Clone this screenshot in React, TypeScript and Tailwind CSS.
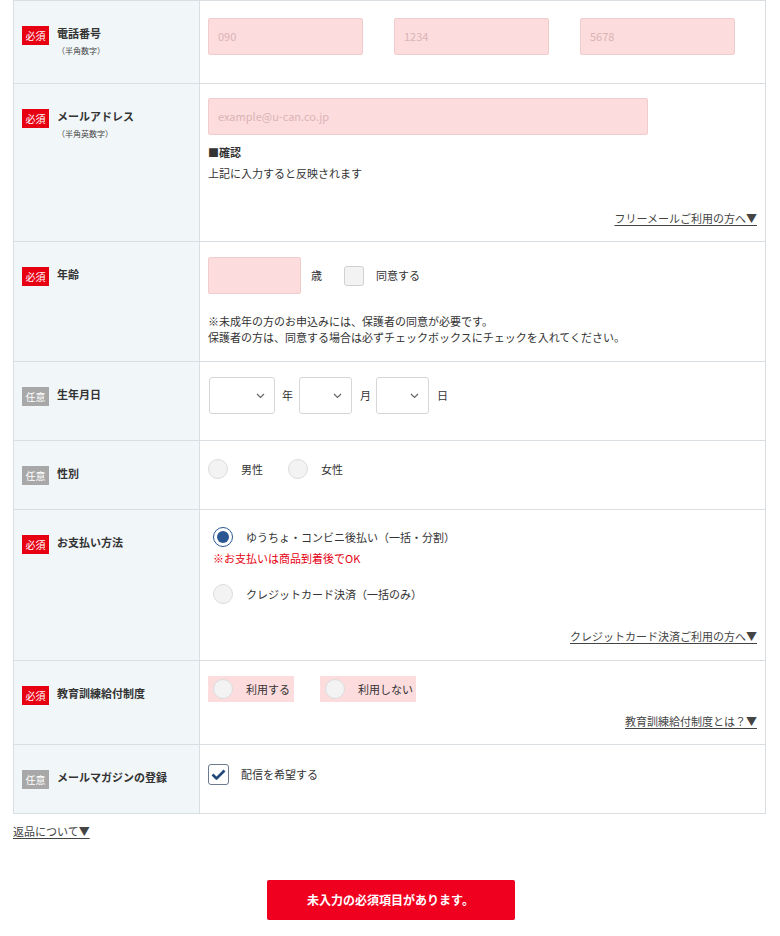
import React from 'react';

const font = { fontFamily: '"Noto Sans CJK JP", "Noto Sans", sans-serif' };

function Badge({ required }: { required: boolean }) {
  return (
    <span
      className={`inline-flex h-[19px] w-[27px] shrink-0 items-center justify-center text-[10px] leading-none text-white ${
        required ? 'bg-[#e60012]' : 'bg-[#a8a8a8]'
      }`}
    >
      {required ? '必須' : '任意'}
    </span>
  );
}

function Label({ required, title, sub }: { required: boolean; title: string; sub?: string }) {
  return (
    <div className="flex w-[186px] shrink-0 gap-[8px] border-r border-[#d9dee2] bg-[#f1f6f9] pl-[8px] pt-[25px]">
      <Badge required={required} />
      <div className="-mt-[2px] flex flex-col">
        <span className="text-[11px] font-bold leading-[19px] text-[#333]">{title}</span>
        {sub && <span className="mt-[2px] text-[8px] leading-[12px] text-[#444]">{sub}</span>}
      </div>
    </div>
  );
}

function Row({ h, children, label }: { h: string; children: React.ReactNode; label: React.ReactNode }) {
  return (
    <div className={`flex border-b border-[#d9dee2] ${h}`}>
      {label}
      <div className="relative flex-1 pl-[8px]">{children}</div>
    </div>
  );
}

function PinkInput({ w, placeholder }: { w: string; placeholder?: string }) {
  return (
    <div
      className={`flex h-[37px] items-center rounded-[2px] border border-[#f1cccc] bg-[#fddcdd] px-[9px] text-[11px] text-[#d9b4b6] ${w}`}
    >
      {placeholder}
    </div>
  );
}

function Radio({ checked }: { checked?: boolean }) {
  return (
    <span
      className={`flex h-[20px] w-[20px] shrink-0 items-center justify-center rounded-full border ${
        checked ? 'border-[#2b5793] bg-white' : 'border-[#dcdcdc] bg-[#f3f3f3]'
      }`}
    >
      {checked && <span className="h-[12px] w-[12px] rounded-full bg-[#2b5793]" />}
    </span>
  );
}

function Select({ w }: { w: string }) {
  return (
    <div className={`flex h-[37px] items-center justify-end rounded-[3px] border border-[#d6d6d6] bg-white pr-[9px] ${w}`}>
      <svg width="9" height="6" viewBox="0 0 9 6" fill="none">
        <path d="M1 1l3.5 3.5L8 1" stroke="#666" strokeWidth="1.2" />
      </svg>
    </div>
  );
}

function MoreLink({ text }: { text: string }) {
  return <span className="text-[11px] text-[#444] underline underline-offset-2">{text}</span>;
}

export default function App() {
  return (
    <div className="min-h-[936px] bg-white text-[#333]" style={font}>
      <div className="ml-[13px] w-[753px] border-x border-t border-[#d9dee2]">
        <Row h="h-[83px]" label={<Label required title="電話番号" sub="（半角数字）" />}>
          <div className="flex gap-[31px] pt-[17px]">
            <PinkInput w="w-[155px]" placeholder="090" />
            <PinkInput w="w-[155px]" placeholder="1234" />
            <PinkInput w="w-[155px]" placeholder="5678" />
          </div>
        </Row>

        <Row h="h-[158px]" label={<Label required title="メールアドレス" sub="（半角英数字）" />}>
          <div className="flex h-full flex-col pt-[14px]">
            <PinkInput w="w-[440px]" placeholder="example@u-can.co.jp" />
            <p className="mt-[9px] text-[11px] font-bold leading-[16px]">■確認</p>
            <p className="mt-[5px] text-[11px] leading-[16px]">上記に入力すると反映されます</p>
            <div className="mt-auto flex justify-end pb-[15px] pr-[8px]">
              <MoreLink text="フリーメールご利用の方へ▼" />
            </div>
          </div>
        </Row>

        <Row h="h-[120px]" label={<Label required title="年齢" />}>
          <div className="pt-[15px]">
            <div className="flex items-center">
              <PinkInput w="w-[93px]" />
              <span className="ml-[10px] text-[11px]">歳</span>
              <span className="ml-[22px] h-[20px] w-[20px] rounded-[3px] border border-[#d0d0d0] bg-[#f3f3f3]" />
              <span className="ml-[12px] text-[11px]">同意する</span>
            </div>
            <p className="mt-[19px] text-[11px] leading-[16px]">
              ※未成年の方のお申込みには、保護者の同意が必要です。
              <br />
              保護者の方は、同意する場合は必ずチェックボックスにチェックを入れてください。
            </p>
          </div>
        </Row>

        <Row h="h-[79px]" label={<Label required={false} title="生年月日" />}>
          <div className="flex items-center pl-[1px] pt-[15px] text-[11px]">
            <Select w="w-[66px]" />
            <span className="ml-[7px] mr-[6px]">年</span>
            <Select w="w-[53px]" />
            <span className="ml-[8px] mr-[5px]">月</span>
            <Select w="w-[53px]" />
            <span className="ml-[8px]">日</span>
          </div>
        </Row>

        <Row h="h-[69px]" label={<Label required={false} title="性別" />}>
          <div className="flex items-center pt-[18px] text-[11px]">
            <Radio />
            <span className="ml-[13px]">男性</span>
            <span className="ml-[25px]">
              <Radio />
            </span>
            <span className="ml-[13px]">女性</span>
          </div>
        </Row>

        <Row h="h-[151px]" label={<Label required title="お支払い方法" />}>
          <div className="flex h-full flex-col pl-[5px] pt-[17px] text-[11px]">
            <div className="flex items-center">
              <Radio checked />
              <span className="ml-[13px]">ゆうちょ・コンビニ後払い（一括・分割）</span>
            </div>
            <p className="mt-[3px] leading-[16px] text-[#e60012]">※お支払いは商品到着後でOK</p>
            <div className="mt-[18px] flex items-center">
              <Radio />
              <span className="ml-[13px]">クレジットカード決済（一括のみ）</span>
            </div>
            <div className="mt-auto flex justify-end pb-[16px] pr-[8px]">
              <MoreLink text="クレジットカード決済ご利用の方へ▼" />
            </div>
          </div>
        </Row>

        <Row h="h-[84px]" label={<Label required title="教育訓練給付制度" />}>
          <div className="flex h-full flex-col pt-[15px] text-[11px]">
            <div className="flex gap-[26px]">
              <div className="flex h-[26px] w-[86px] items-center bg-[#fddcdd] pl-[5px]">
                <Radio />
                <span className="ml-[13px]">利用する</span>
              </div>
              <div className="flex h-[26px] w-[96px] items-center bg-[#fddcdd] pl-[5px]">
                <Radio />
                <span className="ml-[13px]">利用しない</span>
              </div>
            </div>
            <div className="mt-auto flex justify-end pb-[15px] pr-[8px]">
              <MoreLink text="教育訓練給付制度とは？▼" />
            </div>
          </div>
        </Row>

        <Row h="h-[69px]" label={<Label required={false} title="メールマガジンの登録" />}>
          <div className="flex items-center pt-[19px] text-[11px]">
            <span className="flex h-[21px] w-[21px] items-center justify-center rounded-[3px] border border-[#6b7a8c] bg-white">
              <svg width="15" height="12" viewBox="0 0 15 12" fill="none">
                <path d="M1.5 5.5l4 4L13.5 1.5" stroke="#24497b" strokeWidth="2.6" strokeLinejoin="round" />
              </svg>
            </span>
            <span className="ml-[12px]">配信を希望する</span>
          </div>
        </Row>
      </div>

      <div className="ml-[13px] mt-[3px]">
        <MoreLink text="返品について▼" />
      </div>

      <div className="mt-[39px] flex justify-center">
        <button className="ml-[1px] h-[40px] w-[248px] rounded-[2px] bg-[#f0001f] text-[12px] font-bold text-white">
          未入力の必須項目があります。
        </button>
      </div>
    </div>
  );
}
